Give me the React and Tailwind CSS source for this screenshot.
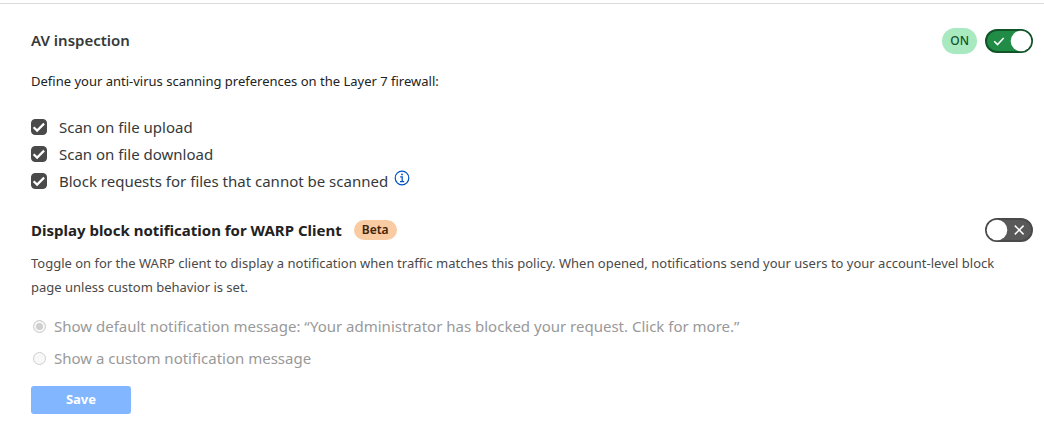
import { useState } from "react";

function Toggle({ label, checked, onChange }) {
  return (
    <label className="relative block h-6 w-12 shrink-0 cursor-pointer">
      <input
        type="checkbox"
        role="switch"
        aria-label={label}
        checked={checked}
        onChange={(e) => onChange(e.target.checked)}
        className="block h-6 w-12 cursor-pointer appearance-none rounded-full border-2 border-[#4a4a4a] bg-[#595959] checked:border-[#115428] checked:bg-[#218c46]"
      />
      <svg viewBox="0 0 48 24" className="pointer-events-none absolute inset-0 h-6 w-12" fill="none" stroke="#fff" aria-hidden="true">
        <circle cx={checked ? 36 : 12} cy="12" r="10.3" fill="#fff" stroke="none" />
        {checked ? (
          <path d="M9.2 12.2l3.3 3.4 6.2-6.6" strokeWidth="1.5" />
        ) : (
          <path d="M29.8 7.6l8.8 8.8M38.6 7.6l-8.8 8.8" strokeWidth="1.5" />
        )}
      </svg>
    </label>
  );
}

function Check({ label, children }) {
  const [on, setOn] = useState(true);
  return (
    <div className="flex items-center gap-1.5">
      <label className="flex items-center gap-3">
        <span className="relative mb-0.5 block size-4">
          <input
            type="checkbox"
            checked={on}
            onChange={(e) => setOn(e.target.checked)}
            className="block size-4 appearance-none rounded border border-[#4a4a4a] bg-white checked:bg-[#4a4a4a]"
          />
          {on && (
            <svg viewBox="0 0 16 16" className="pointer-events-none absolute inset-0 size-4" fill="none" stroke="#fff" strokeWidth="2.2" aria-hidden="true">
              <path d="M2.6 8.2l3.5 3.4 7-7" />
            </svg>
          )}
        </span>
        <span>{label}</span>
      </label>
      {children}
    </div>
  );
}

function Choice({ label, defaultChecked }) {
  return (
    <label className="flex items-center gap-2 px-0.5">
      <input
        type="radio"
        name="message"
        disabled
        defaultChecked={defaultChecked}
        className="size-[13px] shrink-0 appearance-none rounded-full border border-[#cfcfcf] bg-[#f8f8f8] checked:bg-[#cfcfcf] checked:shadow-[inset_0_0_0_2px_#f8f8f8]"
      />
      <span>{label}</span>
    </label>
  );
}

export default function App() {
  const [inspection, setInspection] = useState(true);
  const [notify, setNotify] = useState(false);
  return (
    <main className="mt-[3px] border-t border-[#d9d9d9] pt-6 pr-[11px] pl-[31px] font-['Noto_Sans','Open_Sans',sans-serif] text-[#36393a]">
      <section>
        <div className="flex items-start justify-between">
          <h2 className="text-[15px] leading-6 font-semibold">AV inspection</h2>
          <div className="flex items-center gap-2">
            <span className="rounded-full bg-[#a8e9c0] px-2 text-xs leading-[26px] font-medium text-[#115428]">
              {inspection ? "ON" : "OFF"}
            </span>
            <Toggle label="AV inspection" checked={inspection} onChange={setInspection} />
          </div>
        </div>
        <p className="mt-[17px] text-[13px] leading-5 text-[#222]">
          Define your anti-virus scanning preferences on the Layer 7 firewall:
        </p>
        <div className="mt-6 flex flex-col gap-0.5 text-[15px] leading-[25px]">
          <Check label="Scan on file upload" />
          <Check label="Scan on file download" />
          <Check label="Block requests for files that cannot be scanned">
            <button type="button" aria-label="More information" className="mb-2">
              <svg viewBox="0 0 16 16" className="size-4" fill="none" stroke="#0051c3" aria-hidden="true">
                <circle cx="8" cy="8" r="6.8" strokeWidth="1.2" />
                <path d="M6.2 6.8h2v4.6M6 11.6h4.2" strokeWidth="1.2" />
                <circle cx="8" cy="4.4" r="0.9" fill="#0051c3" stroke="none" />
              </svg>
            </button>
          </Check>
        </div>
      </section>

      <section className="mt-6">
        <div className="flex items-center justify-between">
          <div className="flex items-center gap-3">
            <h2 className="text-[15px] leading-6 font-bold text-[#222]">
              Display block notification for WARP Client
            </h2>
            <span className="rounded-full bg-[#f9cba2] px-2 text-xs leading-5 font-semibold text-[#40230a]">
              Beta
            </span>
          </div>
          <Toggle label="Display block notification for WARP Client" checked={notify} onChange={setNotify} />
        </div>
        <p className="mt-[9px] pr-4 text-[13px] leading-6 text-[#4a4a4a]">
          Toggle on for the WARP client to display a notification when traffic matches this policy. When opened, notifications send your users to your account-level block page unless custom behavior is set.
        </p>
        <div className="mt-[15px] flex flex-col gap-2 text-[15px] leading-6 text-[#999]">
          <Choice label="Show default notification message: “Your administrator has blocked your request. Click for more.”" defaultChecked />
          <Choice label="Show a custom notification message" />
        </div>
        <button type="button" disabled className="mt-4 block h-7 w-[100px] rounded-[3px] bg-[#82b6ff] text-[13px] font-bold text-white">
          Save
        </button>
      </section>
    </main>
  );
}
